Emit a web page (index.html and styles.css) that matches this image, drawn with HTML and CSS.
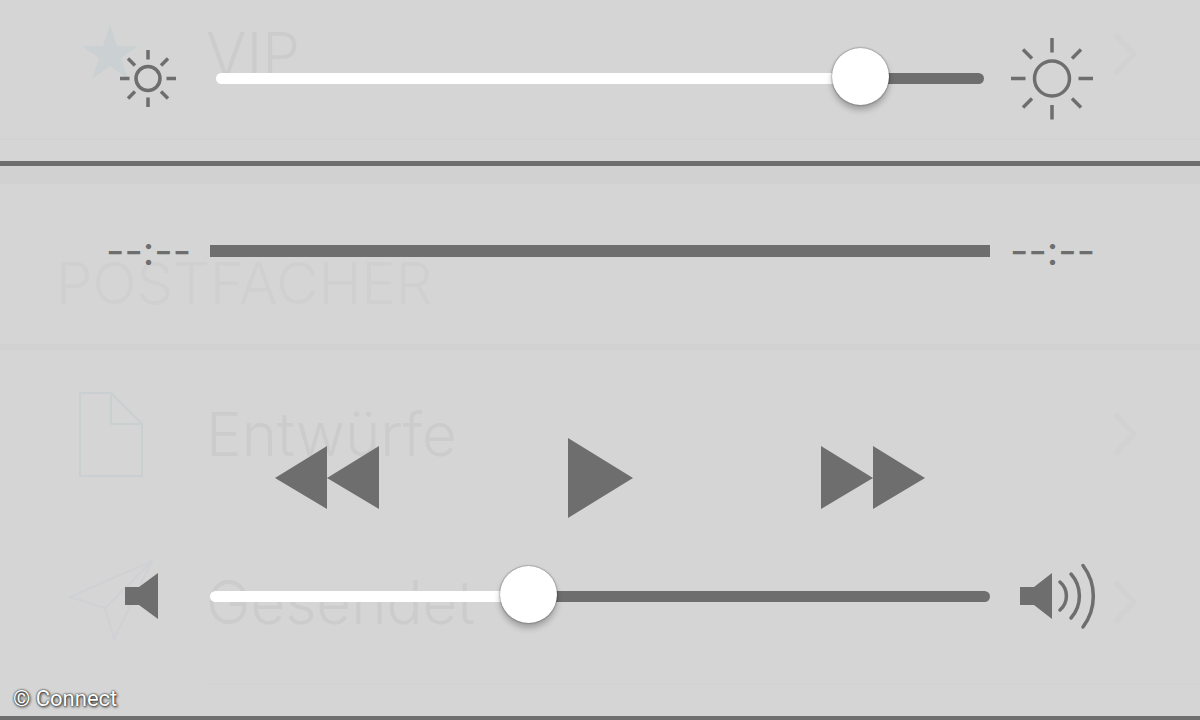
FILE: index.html
```html
<!DOCTYPE html>
<html lang="de">
  <head>
    <meta charset="UTF-8" />
    <meta name="viewport" content="width=device-width, initial-scale=1.0" />
    <title>Kontrollzentrum</title>
    <link rel="stylesheet" href="styles.css">
  </head>
  <body>
    <!-- mail list shining through the panel -->
    <div class="mail-list" aria-hidden="true">
      <div class="mail-row mail-row-first">
        <svg class="mail-icon" viewBox="0 0 90 90">
          <path class="tint-fill" d="M42 16 L49 37 L70 37 L53 49 L60 70 L42 57 L24 70 L31 49 L14 37 L35 37 Z" />
        </svg>
        <span class="mail-name">VIP</span>
        <svg class="chevron" viewBox="0 0 26 46"><path d="M3 3 L22 23 L3 43" /></svg>
      </div>
      <div class="mail-header">POSTFÄCHER</div>
      <div class="mail-row">
        <svg class="mail-icon" viewBox="0 0 90 90">
          <path class="tint-line" d="M12 4 H43 L74 35 V87 H12 Z M43 4 V35 H74" />
        </svg>
        <span class="mail-name">Entwürfe</span>
        <svg class="chevron" viewBox="0 0 26 46"><path d="M3 3 L22 23 L3 43" /></svg>
      </div>
      <div class="mail-row">
        <svg class="mail-icon" viewBox="0 0 90 90">
          <path class="tint-line faint" d="M2 40 L84 4 L46 82 L37 51 Z M37 51 L84 4" />
        </svg>
        <span class="mail-name">Gesendet</span>
        <svg class="chevron" viewBox="0 0 26 46"><path d="M3 3 L22 23 L3 43" /></svg>
      </div>
      <div class="mail-end"></div>
    </div>

    <main class="panel">
      <section class="brightness">
        <div class="control-row">
          <svg class="icon" viewBox="0 0 84 84" aria-hidden="true">
            <g class="sun-small">
              <circle cx="42" cy="42.500" r="12" />
              <path d="M42 14 V23.500 M42 61.500 V71 M14 42.500 H23.500 M60.500 42.500 H70 M22 22.500 L29 29.500 M55 55.500 L62 62.500 M62 22.500 L55 29.500 M29 55.500 L22 62.500" />
            </g>
          </svg>
          <input class="slider slider-inset" type="range" min="0" max="1000" value="866" style="--value: 0.866" aria-label="Helligkeit">
          <svg class="icon" viewBox="0 0 84 84" aria-hidden="true">
            <g class="sun-big">
              <circle cx="42" cy="42.500" r="17.5" />
              <path d="M42 2 V16.500 M42 69 V83.500 M1 42.500 H15.500 M68.500 42.500 H83 M13 13.500 L22 22.500 M62 62.500 L71 71.500 M71 13.500 L62 22.500 M22 62.500 L13 71.500" />
            </g>
          </svg>
        </div>
      </section>

      <section class="media">
        <div class="control-row">
          <span class="time">--:--</span>
          <progress class="progress" max="100" value="0" aria-label="Wiedergabeposition"></progress>
          <span class="time">--:--</span>
        </div>

        <div class="buttons">
          <button type="button" aria-label="Zurück">
            <svg width="104" height="80" viewBox="0 0 104 80"><path d="M0 40 L52 8 V71 Z M52 40 L104 8 V71 Z" /></svg>
          </button>
          <button type="button" aria-label="Wiedergabe">
            <svg width="66" height="80" viewBox="0 0 66 80"><path d="M1 0 L66 40 L1 80 Z" /></svg>
          </button>
          <button type="button" aria-label="Vor">
            <svg width="104" height="80" viewBox="0 0 104 80"><path d="M0 8 L52 40 L0 71 Z M52 8 L104 40 L52 71 Z" /></svg>
          </button>
        </div>

        <div class="control-row">
          <svg class="icon" viewBox="0 0 84 84" aria-hidden="true">
            <path class="speaker" d="M19 33 H33 L52 19 V65 L33 51 H19 Z" />
          </svg>
          <input class="slider" type="range" min="0" max="1000" value="401" style="--value: 0.401" aria-label="Lautstärke">
          <svg class="icon" viewBox="0 0 84 84" aria-hidden="true">
            <path class="speaker" d="M10 33 H24 L42 19 V65 L24 51 H10 Z" />
            <path class="waves" d="M50 28 A18.500 18.500 0 0 1 50 56 M61 20 A33 33 0 0 1 61 64 M73 11.500 A51 51 0 0 1 73 73" />
          </svg>
        </div>
      </section>
    </main>

    <div class="credit">© Connect</div>
  </body>
</html>
```
FILE: styles.css
```css
* {
  margin: 0;
  padding: 0;
  box-sizing: border-box;
}

body {
  position: relative;
  display: grid;
  min-height: 100vh;
  background: #d5d5d5;
  font-family: Inter, 'Liberation Sans', sans-serif;
  overflow-x: hidden;
}

.mail-list,
.panel {
  grid-area: 1 / 1;
}

/* background list */

.mail-list {
  color: #cccccc;
  font-weight: 300;
  overflow: hidden;
}

.mail-row {
  display: flex;
  align-items: center;
  height: 168px;
  padding: 0 62px 0 68px;
}

.mail-row-first {
  margin-top: -30px;
}

.mail-icon {
  width: 90px;
  height: 90px;
  margin-right: 48px;
}

.mail-name {
  flex: 1;
  font-size: 60px;
}

.mail-header {
  height: 212px;
  padding: 114px 56px 0;
  font-size: 58px;
  line-height: 58px;
  color: #d0d0d0;
  border-top: 2px solid #d2d2d2;
  border-bottom: 6px solid #d2d2d2;
  background: linear-gradient(#d5d5d5 26px, #d1d1d1 26px, #d1d1d1 44px, #d5d5d5 44px);
}

.mail-end {
  height: 2px;
  margin-left: 208px;
  margin-top: -3px;
  background: #d3d3d3;
}

.tint-fill {
  fill: #cbd0d3;
}

.tint-line {
  fill: none;
  stroke: #cad0d2;
  stroke-width: 2;
}

.faint {
  stroke: #cfd1d4;
}

.chevron {
  width: 26px;
  height: 46px;
  fill: none;
  stroke: #d2d2d2;
  stroke-width: 5;
}

/* control panel */

.panel {
  position: relative;
  border-bottom: 4px solid #6e6e6e;
}

.brightness {
  padding: 36px 106px 41px;
  border-bottom: 5px solid #6e6e6e;
}

.media {
  padding: 43px 106px 78px;
}

.control-row {
  display: grid;
  grid-template-columns: 84px 1fr 84px;
  gap: 20px;
  align-items: center;
  height: 84px;
}

.icon {
  width: 84px;
  height: 84px;
  overflow: visible;
}

.sun-small,
.sun-big,
.waves {
  fill: none;
  stroke: #6e6e6e;
  stroke-width: 3.5;
}

.waves {
  stroke-linecap: round;
}

.speaker {
  fill: #6e6e6e;
}

.slider {
  appearance: none;
  -webkit-appearance: none;
  min-width: 0;
  height: 57px;
  background: transparent;
  cursor: pointer;
}

.slider-inset {
  margin: 0 6px;
}

.slider::-webkit-slider-runnable-track {
  --fill: calc(28px + (100% - 57px) * var(--value));
  height: 11px;
  border-radius: 6px;
  background: linear-gradient(to right, #fff var(--fill), #6e6e6e var(--fill));
}

.slider::-webkit-slider-thumb {
  -webkit-appearance: none;
  width: 57px;
  height: 57px;
  margin-top: -25px;
  border-radius: 50%;
  background: #fff;
  box-shadow: 0 0 2px rgba(0, 0, 0, 0.6), 0 5px 6px rgba(0, 0, 0, 0.25);
}

.time {
  color: #6e6e6e;
  font-size: 40px;
  font-weight: 400;
  line-height: 40px;
  white-space: nowrap;
}

.progress {
  appearance: none;
  -webkit-appearance: none;
  width: 100%;
  height: 12px;
  border: none;
  background: #6e6e6e;
}

.progress::-webkit-progress-bar {
  background: #6e6e6e;
}

.buttons {
  display: grid;
  grid-template-columns: repeat(3, 1fr);
  justify-items: center;
  margin: 145px 84px 36px;
}

.buttons button {
  border: none;
  background: none;
  cursor: pointer;
}

.buttons svg {
  display: block;
  fill: #6e6e6e;
}

.credit {
  position: absolute;
  left: 13px;
  bottom: 8px;
  color: #fff;
  font-family: Roboto, 'Liberation Sans', sans-serif;
  font-size: 22px;
  line-height: 26px;
  text-shadow: 0 0 2px #000, 1px 1px 3px rgba(0, 0, 0, 0.8);
}
```
